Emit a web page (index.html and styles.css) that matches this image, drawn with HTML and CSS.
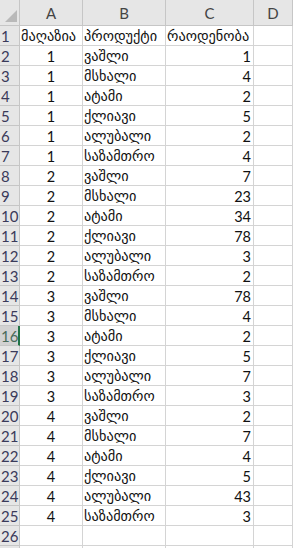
FILE: index.html
```html
<!DOCTYPE html>
<html>
<head>
<meta charset="utf-8">
<link rel="stylesheet" href="styles.css">
</head>
<body>
<div class="sheet">
  <div class="hd corner"><span class="tri"></span></div>
  <div class="hd col">A</div>
  <div class="hd col">B</div>
  <div class="hd col">C</div>
  <div class="hd col">D</div>

  <div class="rh">1</div><div class="c geo">მაღაზია</div><div class="c geo">პროდუქტი</div><div class="c geo">რაოდენობა</div><div class="c"></div>
  <div class="rh">2</div><div class="c n">1</div><div class="c geo">ვაშლი</div><div class="c r">1</div><div class="c"></div>
  <div class="rh">3</div><div class="c n">1</div><div class="c geo">მსხალი</div><div class="c r">4</div><div class="c"></div>
  <div class="rh">4</div><div class="c n">1</div><div class="c geo">ატამი</div><div class="c r">2</div><div class="c"></div>
  <div class="rh">5</div><div class="c n">1</div><div class="c geo">ქლიავი</div><div class="c r">5</div><div class="c"></div>
  <div class="rh">6</div><div class="c n">1</div><div class="c geo">ალუბალი</div><div class="c r">2</div><div class="c"></div>
  <div class="rh">7</div><div class="c n">1</div><div class="c geo">საზამთრო</div><div class="c r">4</div><div class="c"></div>
  <div class="rh">8</div><div class="c n">2</div><div class="c geo">ვაშლი</div><div class="c r">7</div><div class="c"></div>
  <div class="rh">9</div><div class="c n">2</div><div class="c geo">მსხალი</div><div class="c r">23</div><div class="c"></div>
  <div class="rh">10</div><div class="c n">2</div><div class="c geo">ატამი</div><div class="c r">34</div><div class="c"></div>
  <div class="rh">11</div><div class="c n">2</div><div class="c geo">ქლიავი</div><div class="c r">78</div><div class="c"></div>
  <div class="rh">12</div><div class="c n">2</div><div class="c geo">ალუბალი</div><div class="c r">3</div><div class="c"></div>
  <div class="rh">13</div><div class="c n">2</div><div class="c geo">საზამთრო</div><div class="c r">2</div><div class="c"></div>
  <div class="rh">14</div><div class="c n">3</div><div class="c geo">ვაშლი</div><div class="c r">78</div><div class="c"></div>
  <div class="rh">15</div><div class="c n">3</div><div class="c geo">მსხალი</div><div class="c r">4</div><div class="c"></div>
  <div class="rh sel">16</div><div class="c n">3</div><div class="c geo">ატამი</div><div class="c r">2</div><div class="c"></div>
  <div class="rh">17</div><div class="c n">3</div><div class="c geo">ქლიავი</div><div class="c r">5</div><div class="c"></div>
  <div class="rh">18</div><div class="c n">3</div><div class="c geo">ალუბალი</div><div class="c r">7</div><div class="c"></div>
  <div class="rh">19</div><div class="c n">3</div><div class="c geo">საზამთრო</div><div class="c r">3</div><div class="c"></div>
  <div class="rh">20</div><div class="c n">4</div><div class="c geo">ვაშლი</div><div class="c r">2</div><div class="c"></div>
  <div class="rh">21</div><div class="c n">4</div><div class="c geo">მსხალი</div><div class="c r">7</div><div class="c"></div>
  <div class="rh">22</div><div class="c n">4</div><div class="c geo">ატამი</div><div class="c r">4</div><div class="c"></div>
  <div class="rh">23</div><div class="c n">4</div><div class="c geo">ქლიავი</div><div class="c r">5</div><div class="c"></div>
  <div class="rh">24</div><div class="c n">4</div><div class="c geo">ალუბალი</div><div class="c r">43</div><div class="c"></div>
  <div class="rh">25</div><div class="c n">4</div><div class="c geo">საზამთრო</div><div class="c r">3</div><div class="c"></div>
  <div class="rh">26</div><div class="c"></div><div class="c"></div><div class="c"></div><div class="c"></div>
  <div class="rh"></div><div class="c"></div><div class="c"></div><div class="c"></div><div class="c"></div>
</div>
</body>
</html>
```

FILE: styles.css
```css
html, body {
  margin: 0;
  padding: 0;
  background: #ffffff;
  overflow: hidden;
}

.sheet {
  display: grid;
  grid-template-columns: 20px 63px 83px 88px 1fr;
  grid-template-rows: 26px;
  grid-auto-rows: 20px;
  width: 100%;
  font-family: "Lato", "Open Sans", sans-serif;
  font-size: 14.5px;
  color: #111111;
}

.hd {
  background: #e6e6e6;
  border-right: 1px solid #c6c6c6;
  border-bottom: 1px solid #c6c6c6;
  box-sizing: border-box;
}

.col {
  display: flex;
  align-items: center;
  justify-content: center;
  color: #444444;
  font-size: 15px;
  padding-top: 1px;
}

.corner {
  position: relative;
}

.tri {
  position: absolute;
  right: 2px;
  bottom: 3px;
  width: 0;
  height: 0;
  border-left: 12px solid transparent;
  border-bottom: 12px solid #b9b9b9;
}

.rh {
  background: #e6e6e6;
  border-right: 1px solid #c6c6c6;
  border-bottom: 1px solid #c6c6c6;
  box-sizing: border-box;
  color: #3a3a5a;
  font-size: 15px;
  padding-left: 1px;
  display: flex;
  align-items: center;
  overflow: hidden;
  white-space: nowrap;
}

.rh.sel {
  background: #d2d2d2;
  color: #496b5a;
  border-right: 2px solid #217346;
}

.c {
  border-right: 1px solid #d4d4d4;
  border-bottom: 1px solid #d4d4d4;
  box-sizing: border-box;
  display: flex;
  align-items: center;
  padding: 1px 2px 0 2px;
  white-space: nowrap;
  overflow: visible;
}

.n {
  justify-content: center;
}

.r {
  justify-content: flex-end;
}

.geo {
  font-family: "DejaVu Sans", sans-serif;
  font-size: 14.3px;
  padding-left: 1px;
}
```
